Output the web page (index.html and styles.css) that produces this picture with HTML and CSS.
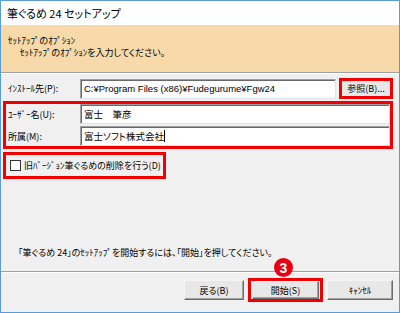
FILE: index.html
```html
<!DOCTYPE html>
<html lang="ja">
<head>
    <meta charset="UTF-8">
    <title>筆ぐるめ 24 セットアップ</title>
    <link rel="stylesheet" href="styles.css">
</head>
<body>
    <div class="window">
        <div class="titlebar">筆ぐるめ 24 セットアップ</div>
        <div class="banner">
            <div class="banner-title">ｾｯﾄｱｯﾌﾟのｵﾌﾟｼｮﾝ</div>
            <div class="banner-sub">ｾｯﾄｱｯﾌﾟのｵﾌﾟｼｮﾝを入力してください。</div>
        </div>
        <div class="content">
            <div class="row">
                <span class="label">ｲﾝｽﾄｰﾙ先(P):</span>
                <div class="field">C:¥Program Files (x86)¥Fudegurume¥Fgw24</div>
                <div class="mark browse-mark">
                    <div class="btn browse">参照(B)...</div>
                </div>
            </div>
            <div class="mark group">
                <div class="row">
                    <span class="label">ﾕｰｻﾞｰ名(U):</span>
                    <div class="field">富士　筆彦</div>
                </div>
                <div class="row">
                    <span class="label">所属(M):</span>
                    <div class="field">富士ソフト株式会社<span class="caret"></span></div>
                </div>
            </div>
            <div class="mark check-mark">
                <span class="checkbox"></span>
                <span>旧ﾊﾞｰｼﾞｮﾝ筆ぐるめの削除を行う(D)</span>
            </div>
            <div class="spacer"></div>
            <p class="message">「筆ぐるめ 24」のｾｯﾄｱｯﾌﾟを開始するには、「開始」を押してください。</p>
        </div>
        <div class="footer">
            <div class="btn back">戻る(B)</div>
            <div class="mark start-mark">
                <div class="btn start">開始(S)</div>
            </div>
            <div class="btn cancel">ｷｬﾝｾﾙ</div>
        </div>
        <div class="badge">3</div>
    </div>
</body>
</html>
```

FILE: styles.css
```css
* {
    box-sizing: border-box;
}
body {
    margin: 0;
    font-family: "Noto Sans CJK JP", sans-serif;
    font-size: 9px;
    color: #000;
    font-feature-settings: "palt";
    white-space: nowrap;
}
.window {
    position: relative;
    width: 400px;
    height: 313px;
    border: 1px solid #5b9bd5;
    background: #f0f0f0;
    display: flex;
    flex-direction: column;
}
.titlebar {
    height: 24px;
    flex: none;
    background: #fff;
    padding-left: 6px;
    display: flex;
    align-items: center;
    font-size: 11px;
}
.banner {
    height: 48px;
    flex: none;
    background: #f7d9aa;
    border-bottom: 1px solid #a0a0a0;
    padding: 10px 0 0 7px;
    line-height: 12px;
}
.banner-sub {
    padding-left: 12px;
}
.content {
    flex: 1;
    display: flex;
    flex-direction: column;
    padding: 0 6px 0 2px;
    border-top: 1px solid #fff;
}
.row {
    display: flex;
    align-items: center;
    height: 21px;
}
.content > .row {
    margin-top: 4px;
    padding-left: 5px;
}
.label {
    width: 72px;
    flex: none;
}
.field {
    flex: 1;
    height: 20px;
    background: #fff;
    border: 1px solid;
    border-color: #a0a0a0 #e3e3e3 #e3e3e3 #a0a0a0;
    box-shadow: inset 1px 1px 0 #696969;
    padding-left: 3px;
    display: flex;
    align-items: center;
    font-family: "Liberation Sans", "Noto Sans CJK JP", sans-serif;
    font-size: 9.5px;
}
.caret {
    width: 1px;
    height: 12px;
    background: #000;
}
.mark {
    border: 3px solid #f00000;
}
.browse-mark {
    width: 54px;
    height: 21px;
    margin-left: 3px;
    flex: none;
    display: flex;
}
.btn {
    background: #e8e8e8;
    border: 1px solid;
    border-color: #f4f4f4 #6d6d6d #6d6d6d #f4f4f4;
    box-shadow: inset -1px -1px 0 #a0a0a0;
    display: flex;
    align-items: center;
    justify-content: center;
    height: 20px;
}
.browse {
    flex: 1;
    height: auto;
    border-color: #e8e8e8;
    box-shadow: none;
}
.group {
    margin-top: 2px;
    height: 48px;
    padding-left: 2px;
    display: flex;
    flex-direction: column;
    gap: 2px;
}
.group .row {
    height: 20px;
}
.check-mark {
    margin-top: 3px;
    width: 163px;
    height: 27px;
    padding-left: 4px;
    display: flex;
    align-items: center;
}
.checkbox {
    width: 11px;
    height: 11px;
    border: 1px solid #333;
    background: #fff;
    margin-right: 3px;
}
.spacer {
    flex: 1;
}
.message {
    margin: 0 0 11px;
    padding-left: 15px;
    line-height: 14px;
}
.footer {
    height: 41px;
    flex: none;
    border-top: 1px solid #a0a0a0;
    box-shadow: inset 0 1px 0 #fff;
    padding: 6px 6px 0 0;
    display: flex;
    justify-content: flex-end;
    align-items: flex-start;
}
.footer > * {
    margin-top: 2px;
}
.back {
    width: 60px;
    margin-right: 4px;
}
.start-mark {
    margin-top: 0;
    width: 75px;
    height: 24px;
    display: flex;
    align-items: center;
    justify-content: center;
}
.start {
    width: 67px;
    height: 18px;
}
.cancel {
    width: 66px;
    margin-left: 4px;
}
.badge {
    position: absolute;
    left: 273px;
    top: 257px;
    width: 19px;
    height: 19px;
    border-radius: 50%;
    background: #e60012;
    color: #fff;
    font-family: "Liberation Sans", sans-serif;
    font-weight: bold;
    font-size: 14px;
    display: flex;
    align-items: center;
    justify-content: center;
}
```
